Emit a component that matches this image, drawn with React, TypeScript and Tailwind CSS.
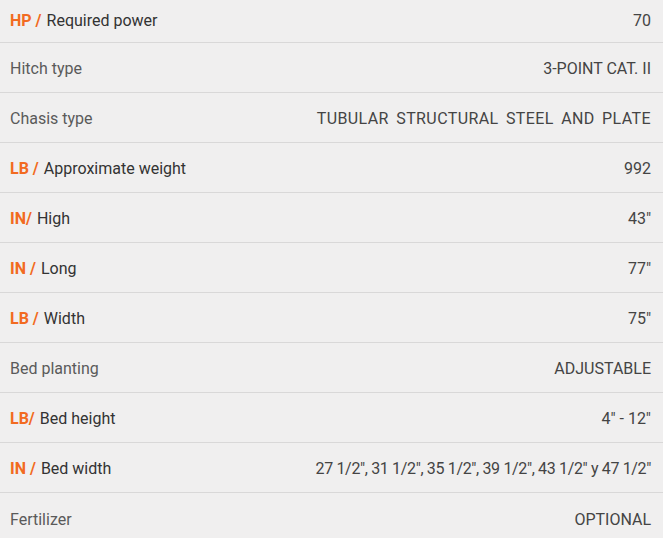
// @ts-nocheck
const rows = [
  { unit: 'HP /', label: 'Required power', value: '70' },
  { label: 'Hitch type', value: '3-POINT CAT. II' },
  { label: 'Chasis type', value: 'TUBULAR STRUCTURAL STEEL AND PLATE', wide: true },
  { unit: 'LB /', label: 'Approximate weight', value: '992' },
  { unit: 'IN/', label: 'High', value: '43"' },
  { unit: 'IN /', label: 'Long', value: '77"' },
  { unit: 'LB /', label: 'Width', value: '75"' },
  { label: 'Bed planting', value: 'ADJUSTABLE' },
  { unit: 'LB/', label: 'Bed height', value: '4" - 12"' },
  { unit: 'IN /', label: 'Bed width', value: '27 1/2", 31 1/2", 35 1/2", 39 1/2", 43 1/2" y 47 1/2"', tight: true },
  { label: 'Fertilizer', value: 'OPTIONAL' },
];

export default function App() {
  return (
    <div className="w-[663px] h-[538px] overflow-hidden bg-[#f0efef] font-['Roboto',sans-serif] text-[16px]">
      {rows.map((r, i) => (
        <div
          key={i}
          className={
            'flex items-center justify-between pl-[10px] pr-[12px] ' +
            (i === 0 ? 'h-[43px] pb-[1px] ' : 'h-[50px] pt-[3px] ') +
            (i < rows.length - 1 ? 'border-b border-[#d9d8d8]' : '')
          }
        >
          <div className={r.unit ? 'text-[#333]' : 'text-[#5a5a5a]'}>
            {r.unit && <span className="font-bold text-[#f26a21] mr-[5px]">{r.unit}</span>}
            {r.label}
          </div>
          <div
            className={
              'text-[#444] ' +
              (r.wide ? 'tracking-[0.4px] [word-spacing:3px]' : '') +
              (r.tight ? 'tracking-[-0.35px]' : '')
            }
          >
            {r.value}
          </div>
        </div>
      ))}
    </div>
  );
}
